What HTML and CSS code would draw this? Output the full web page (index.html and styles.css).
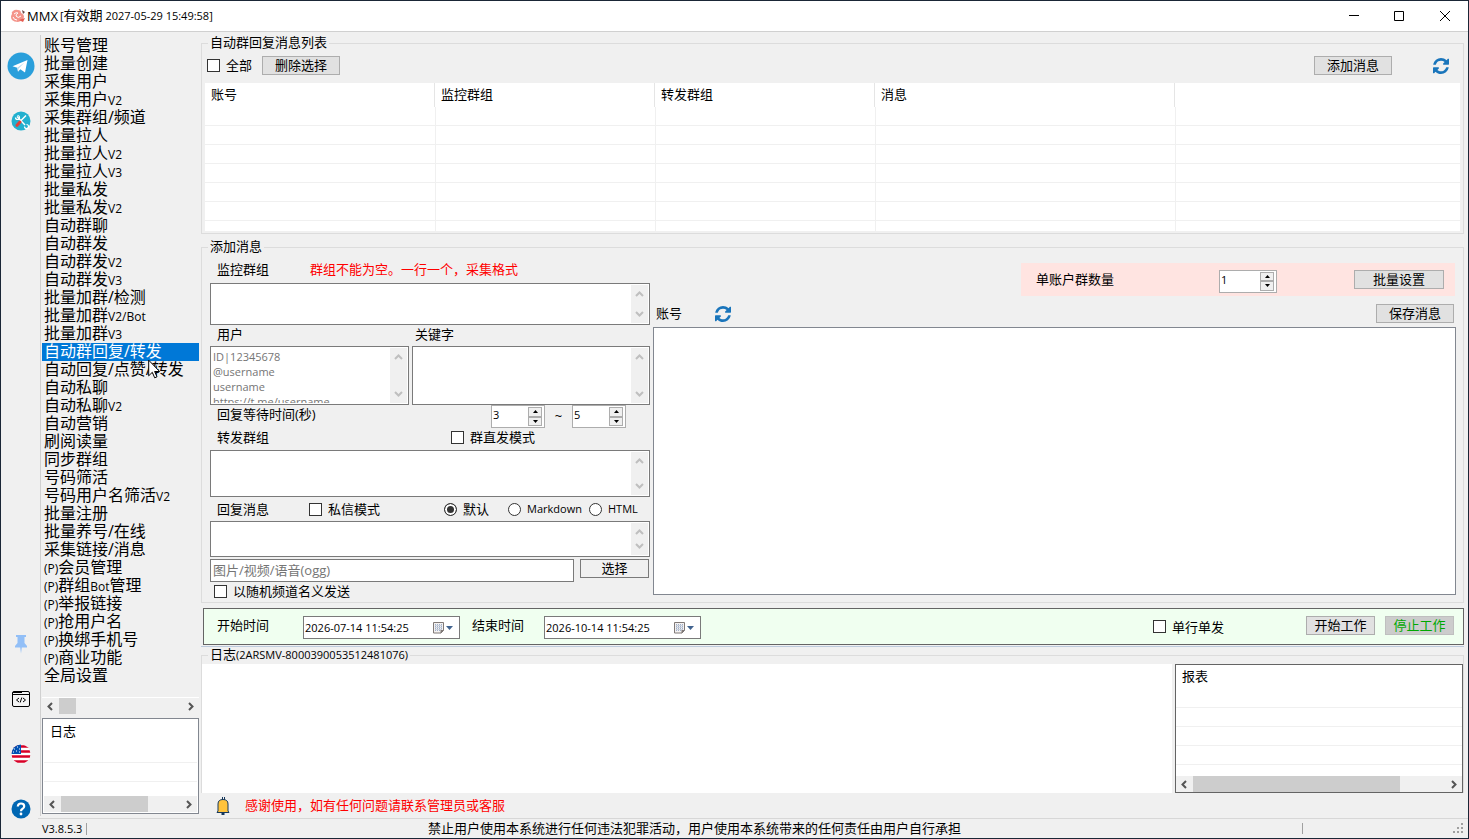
FILE: index.html
```html
<!DOCTYPE html>
<html lang="zh-CN">
<head>
  <meta charset="UTF-8">
  <meta name="viewport" content="width=device-width, initial-scale=1.0">
  <title>MMX</title>
  <link rel="stylesheet" href="styles.css">
</head>
<body>
  <!-- Shared icons -->
  <svg class="sprite" width="0" height="0">
    <symbol id="up" viewBox="0 0 9 6"><path d="M1 5 L4.500 1.500 L8 5" fill="none" stroke="currentColor" stroke-width="2"/></symbol>
    <symbol id="down" viewBox="0 0 9 6"><path d="M1 1 L4.500 4.500 L8 1" fill="none" stroke="currentColor" stroke-width="2"/></symbol>
    <symbol id="left" viewBox="0 0 6 9"><path d="M5 1 L1.500 4.500 L5 8" fill="none" stroke="currentColor" stroke-width="2"/></symbol>
    <symbol id="right" viewBox="0 0 6 9"><path d="M1 1 L4.500 4.500 L1 8" fill="none" stroke="currentColor" stroke-width="2"/></symbol>
    <symbol id="tri-up" viewBox="0 0 5 3"><path d="M0 3 L2.500 0 L5 3z"/></symbol>
    <symbol id="tri-down" viewBox="0 0 5 3"><path d="M0 0 L2.500 3 L5 0z"/></symbol>
    <symbol id="refresh" viewBox="128 128 1536 1536"><path fill="#1a75bb" d="M1639 1056q0 5-1 7-64 268-268 434.500t-478 166.500q-146 0-282.500-55t-243.500-157l-129 129q-19 19-45 19t-45-19-19-45v-448q0-26 19-45t45-19h448q26 0 45 19t19 45-19 45l-137 137q71 66 161 102t187 36q134 0 250-65t186-179q11-17 53-117 8-23 30-23h192q13 0 22.500 9.500t9.500 22.500zm25-800v448q0 26-19 45t-45 19h-448q-26 0-45-19t-19-45 19-45l138-138q-148-137-349-137-134 0-250 65t-186 179q-11 17-53 117-8 23-30 23h-199q-13 0-22.500-9.500t-9.500-22.500v-7q65-268 270-434.500t480-166.500q146 0 284 55.500t245 156.500l130-129q19-19 45-19t45 19 19 45z"/></symbol>
    <symbol id="calendar" viewBox="0 0 21 14">
      <path d="M.5 1.500h10v8l-2.500 2.500h-7.500z" fill="#f4f1f0" stroke="#7f7977"/>
      <path d="M2 3.500h7M2 5.500h7M2 7.500h7M2 9.500h5" stroke="#9fb0ca" stroke-dasharray="1 1"/>
      <path d="M2 4.500h7M2 6.500h7M2 8.500h7" stroke="#c9d0dc"/>
      <path d="M7.500 12.500v-3.500h3.500z" fill="#7f7977"/>
      <path d="M13 5h7l-3.500 4z" fill="#41638f"/>
    </symbol>
  </svg>

  <header class="titlebar">
    <svg class="logo" width="16" height="16" viewBox="0 0 16 16">
      <path d="M3 3 Q5 1 8 2 Q11 2 11 5 Q14 6 14 9 Q13 13 8 14 Q4 14 2 12 Q0 9 2 6 Q1 4 3 3z" fill="#f4958b"/>
      <path d="M4 6 Q6 4 8 5 Q6 6 6 8 Q8 11 11 8 M3 9 Q4 12 7 12" fill="none" stroke="#fff" stroke-width="1"/>
      <path d="M12 2 L15 4 L13 6z" fill="#6d4a47"/>
      <path d="M9 12 L15 10 L13 14z" fill="#e55c52"/>
    </svg>
    <h1 class="window-title">MMX</h1>
    <span class="expiry">[<span class="cjk">有效期</span> 2027-05-29 15:49:58]</span>
    <div class="window-controls">
      <button aria-label="最小化"><svg width="11" height="11" viewBox="0 0 11 11"><path d="M1 4.500h10" stroke="#000"/></svg></button>
      <button aria-label="最大化"><svg width="11" height="11" viewBox="0 0 11 11"><path d="M.5 .5h9v9h-9z" fill="none" stroke="#000"/></svg></button>
      <button aria-label="关闭"><svg width="11" height="11" viewBox="0 0 11 11"><path d="M0 0l10 10M10 0l-10 10" stroke="#000"/></svg></button>
    </div>
  </header>

  <div class="workspace">
    <div class="rail">
      <button aria-label="Telegram">
        <svg width="28" height="28" viewBox="0 0 28 28"><circle cx="14" cy="14" r="13.500" fill="#2a9fdb"/><path d="M5.500 14.300 L20.500 8 L18 20.500 L13.300 17.300 L11 19.800 L10.300 15.800z" fill="#fff"/><path d="M10.300 15.800 L17.500 10.500 L11.600 16.500 L11 19.800z" fill="#b5d9ee"/></svg>
      </button>
      <button aria-label="工具">
        <svg width="20" height="20" viewBox="0 0 20 20"><circle cx="10" cy="10" r="9.500" fill="#22b0cf"/><path d="M6 5.500 L14 14" stroke="#fff" stroke-width="1.400"/><path d="M4.500 6.500a2 2 0 1 0 2-2M13.500 15.500a2 2 0 1 0 2-2" fill="none" stroke="#fff" stroke-width="1.200"/><path d="M15 4.500 L10 9.500" stroke="#fff" stroke-width="1.500"/><path d="M9 11 L6 14.300" stroke="#e0413a" stroke-width="3" stroke-linecap="round"/></svg>
      </button>
      <span class="rail-space"></span>
      <button aria-label="置顶">
        <svg width="20" height="20" viewBox="0 0 20 20"><path d="M5 1h10v2h-1.500v6l2.500 3v1.500h-5.200L10 19.500 9.200 13.500H4V12l2.500-3V3H5z" fill="#92bff7"/></svg>
      </button>
      <button aria-label="代码">
        <svg width="20" height="20" viewBox="0 0 20 20"><rect x="1.500" y="2.500" width="17" height="15" rx="1.500" fill="#f4f4f4" stroke="#000"/><path d="M1.500 5.500h17" stroke="#000"/><path d="M2 3.500h9" stroke="#000"/><path d="M8 9l-2.500 2 2.500 2M12 9l2.500 2-2.500 2M10.800 8.500l-1.600 5" fill="none" stroke="#000"/></svg>
      </button>
      <button aria-label="语言">
        <svg width="20" height="20" viewBox="0 0 20 20"><clipPath id="disc"><circle cx="10" cy="10" r="9.500"/></clipPath><g clip-path="url(#disc)"><path d="M0 0h20v20H0z" fill="#fff"/><path d="M0 2.500h20M0 7.500h20M0 12.500h20M0 17.500h20" stroke="#d80027" stroke-width="2.400"/><path d="M0 0h10v10H0z" fill="#0052b4"/><path d="M3 5h1M6 3h1M8 5h1M5 7h1M8 8h1M2 8h1" stroke="#fff" stroke-width="1"/></g></svg>
      </button>
      <button aria-label="帮助">
        <svg width="20" height="20" viewBox="0 0 20 20"><circle cx="10" cy="10" r="9.500" fill="#0067b3"/><path d="M6.800 7.500 Q7 4.500 10 4.500 Q13.200 4.500 13.200 7.300 Q13.200 9 11.300 10 Q10 10.700 10 12.300" fill="none" stroke="#fff" stroke-width="2.200"/><circle cx="10" cy="15" r="1.400" fill="#fff"/></svg>
      </button>
    </div>

    <aside class="sidebar">
      <nav class="menu">
        <a href="#">账号管理</a>
        <a href="#">批量创建</a>
        <a href="#">采集用户</a>
        <a href="#">采集用户<small>V2</small></a>
        <a href="#">采集群组/频道</a>
        <a href="#">批量拉人</a>
        <a href="#">批量拉人<small>V2</small></a>
        <a href="#">批量拉人<small>V3</small></a>
        <a href="#">批量私发</a>
        <a href="#">批量私发<small>V2</small></a>
        <a href="#">自动群聊</a>
        <a href="#">自动群发</a>
        <a href="#">自动群发<small>V2</small></a>
        <a href="#">自动群发<small>V3</small></a>
        <a href="#">批量加群/检测</a>
        <a href="#">批量加群<small>V2/Bot</small></a>
        <a href="#">批量加群<small>V3</small></a>
        <a href="#" class="active">自动群回复/转发
          <svg class="cursor" width="13" height="20" viewBox="0 0 13 20"><path d="M.7 1.200v15.600l3.600-3.500 2.400 5.500 2.300-1-2.400-5.300h5z" fill="#fff" stroke="#000"/></svg>
        </a>
        <a href="#">自动回复/点赞/转发</a>
        <a href="#">自动私聊</a>
        <a href="#">自动私聊<small>V2</small></a>
        <a href="#">自动营销</a>
        <a href="#">刷阅读量</a>
        <a href="#">同步群组</a>
        <a href="#">号码筛活</a>
        <a href="#">号码用户名筛活<small>V2</small></a>
        <a href="#">批量注册</a>
        <a href="#">批量养号/在线</a>
        <a href="#">采集链接/消息</a>
        <a href="#"><small>(P)</small>会员管理</a>
        <a href="#"><small>(P)</small>群组<small>Bot</small>管理</a>
        <a href="#"><small>(P)</small>举报链接</a>
        <a href="#"><small>(P)</small>抢用户名</a>
        <a href="#"><small>(P)</small>换绑手机号</a>
        <a href="#"><small>(P)</small>商业功能</a>
        <a href="#">全局设置</a>
      </nav>
      <div class="hscroll menu-scroll">
        <svg width="6" height="9"><use href="#left"/></svg>
        <div class="track"><div class="thumb"></div></div>
        <svg width="6" height="9"><use href="#right"/></svg>
      </div>
      <div class="side-log">
        <div class="lines">
          <table>
            <thead><tr><th>日志</th></tr></thead>
            <tbody><tr><td></td></tr><tr><td></td></tr></tbody>
          </table>
        </div>
        <div class="hscroll">
          <svg width="6" height="9"><use href="#left"/></svg>
          <div class="track"><div class="thumb"></div></div>
          <svg width="6" height="9"><use href="#right"/></svg>
        </div>
      </div>
    </aside>

    <main class="main">
      <fieldset class="list-group">
        <legend>自动群回复消息列表</legend>
        <div class="list-tools">
          <label class="check"><input type="checkbox"><span>全部</span></label>
          <button class="btn wide">删除选择</button>
          <button class="btn wide add">添加消息</button>
          <button class="icon-btn" aria-label="刷新"><svg width="16" height="16"><use href="#refresh"/></svg></button>
        </div>
        <div class="message-list">
          <table>
            <colgroup><col class="c-account"><col class="c-group"><col class="c-group"><col class="c-message"><col></colgroup>
            <thead>
              <tr><th>账号</th><th>监控群组</th><th>转发群组</th><th>消息</th><th></th></tr>
            </thead>
            <tbody>
              <tr><td></td><td></td><td></td><td></td><td></td></tr>
              <tr><td></td><td></td><td></td><td></td><td></td></tr>
              <tr><td></td><td></td><td></td><td></td><td></td></tr>
              <tr><td></td><td></td><td></td><td></td><td></td></tr>
              <tr><td></td><td></td><td></td><td></td><td></td></tr>
              <tr><td></td><td></td><td></td><td></td><td></td></tr>
              <tr><td></td><td></td><td></td><td></td><td></td></tr>
            </tbody>
          </table>
        </div>
      </fieldset>

      <fieldset class="editor-group">
        <legend>添加消息</legend>
        <div class="editor">
          <div class="form">
            <div class="row row-monitor">
              <label for="monitor">监控群组</label>
              <span class="warn">群组不能为空。一行一个，采集格式</span>
            </div>
            <div class="area area-monitor">
              <textarea id="monitor"></textarea>
              <div class="vscroll"><svg width="9" height="6"><use href="#up"/></svg><svg width="9" height="6"><use href="#down"/></svg></div>
            </div>
            <div class="row row-pair">
              <label for="users">用户</label>
              <label for="keywords">关键字</label>
            </div>
            <div class="pair">
              <div class="area">
                <textarea id="users" placeholder="ID|12345678&#10;@username&#10;username&#10;https://t.me/username"></textarea>
                <div class="vscroll"><svg width="9" height="6"><use href="#up"/></svg><svg width="9" height="6"><use href="#down"/></svg></div>
              </div>
              <div class="area">
                <textarea id="keywords"></textarea>
                <div class="vscroll"><svg width="9" height="6"><use href="#up"/></svg><svg width="9" height="6"><use href="#down"/></svg></div>
              </div>
            </div>
            <div class="row row-wait">
              <label for="wait-from">回复等待时间(秒)</label>
              <div class="spin">
                <input type="number" id="wait-from" value="3">
                <div class="spin-buttons"><button aria-label="增加"><svg width="5" height="3"><use href="#tri-up"/></svg></button><button aria-label="减少"><svg width="5" height="3"><use href="#tri-down"/></svg></button></div>
              </div>
              <span class="tilde">~</span>
              <div class="spin">
                <input type="number" aria-label="最长等待" value="5">
                <div class="spin-buttons"><button aria-label="增加"><svg width="5" height="3"><use href="#tri-up"/></svg></button><button aria-label="减少"><svg width="5" height="3"><use href="#tri-down"/></svg></button></div>
              </div>
            </div>
            <div class="row row-forward">
              <label for="forward">转发群组</label>
              <label class="check"><input type="checkbox"><span>群直发模式</span></label>
            </div>
            <div class="area area-forward">
              <textarea id="forward"></textarea>
              <div class="vscroll"><svg width="9" height="6"><use href="#up"/></svg><svg width="9" height="6"><use href="#down"/></svg></div>
            </div>
            <div class="row row-reply">
              <label for="reply">回复消息</label>
              <label class="check"><input type="checkbox">私信模式</label>
              <label class="check"><input type="radio" name="format" checked>默认</label>
              <label class="check latin"><input type="radio" name="format">Markdown</label>
              <label class="check latin"><input type="radio" name="format">HTML</label>
            </div>
            <div class="area area-reply">
              <textarea id="reply"></textarea>
              <div class="vscroll"><svg width="9" height="6"><use href="#up"/></svg><svg width="9" height="6"><use href="#down"/></svg></div>
            </div>
            <div class="file-row">
              <input type="text" class="file" aria-label="媒体文件" placeholder="图片/视频/语音(ogg)">
              <button class="btn plain">选择</button>
            </div>
            <label class="check random"><input type="checkbox"><span>以随机频道名义发送</span></label>
          </div>

          <div class="accounts">
            <div class="batch">
              <label for="per-account">单账户群数量</label>
              <div class="spin">
                <input type="number" id="per-account" value="1">
                <div class="spin-buttons"><button aria-label="增加"><svg width="5" height="3"><use href="#tri-up"/></svg></button><button aria-label="减少"><svg width="5" height="3"><use href="#tri-down"/></svg></button></div>
              </div>
              <button class="btn batch-btn">批量设置</button>
            </div>
            <div class="accounts-head">
              <span>账号</span>
              <button class="icon-btn" aria-label="刷新账号"><svg width="16" height="16"><use href="#refresh"/></svg></button>
              <button class="btn wide">保存消息</button>
            </div>
            <div class="account-list"></div>
          </div>
        </div>
      </fieldset>

      <div class="schedule-wrap">
        <div class="schedule">
          <label for="start">开始时间</label>
          <div class="date">
            <input type="text" id="start" value="2026-07-14 11:54:25">
            <button aria-label="选择开始时间"><svg width="21" height="14"><use href="#calendar"/></svg></button>
          </div>
          <label for="end">结束时间</label>
          <div class="date">
            <input type="text" id="end" value="2026-10-14 11:54:25">
            <button aria-label="选择结束时间"><svg width="21" height="14"><use href="#calendar"/></svg></button>
          </div>
          <label class="check single"><input type="checkbox">单行单发</label>
          <button class="btn">开始工作</button>
          <button class="btn stop">停止工作</button>
        </div>
      </div>

      <fieldset class="log-group">
        <legend>日志<span class="latin">(2ARSMV-8000390053512481076)</span></legend>
        <div class="logs">
          <div class="log"></div>
          <div class="report">
            <div class="lines">
              <table>
                <thead><tr><th>报表</th></tr></thead>
                <tbody><tr><td></td></tr><tr><td></td></tr><tr><td></td></tr><tr><td></td></tr></tbody>
              </table>
            </div>
            <div class="hscroll">
              <svg width="6" height="9"><use href="#left"/></svg>
              <div class="track"><div class="thumb"></div></div>
              <svg width="6" height="9"><use href="#right"/></svg>
            </div>
          </div>
        </div>
      </fieldset>

      <div class="notice">
        <svg width="14" height="18" viewBox="0 0 14 18"><path d="M6.500 0v3M8.500 0v3" stroke="#16385c"/><path d="M2 14V7 Q2 2.500 7 2.500 Q12 2.500 12 7v7l1 1.500H1z" fill="#ffc33c" stroke="#16385c"/><path d="M5.500 17h3" stroke="#16385c" stroke-width="2"/></svg>
        <span>感谢使用，如有任何问题请联系管理员或客服</span>
      </div>
    </main>
  </div>

  <footer class="statusbar">
    <span class="version">V3.8.5.3</span>
    <span class="disclaimer">禁止用户使用本系统进行任何违法犯罪活动，用户使用本系统带来的任何责任由用户自行承担</span>
    <span class="grip"><svg width="11" height="11" viewBox="0 0 11 11"><path d="M8 0h2v2H8zM4 4h2v2H4zM8 4h2v2H8zM0 8h2v2H0zM4 8h2v2H4zM8 8h2v2H8z" fill="#a0a0a0"/></svg></span>
  </footer>
</body>
</html>
```
FILE: styles.css
```css
* {
  box-sizing: border-box;
}
body {
  margin: 0;
  min-height: 100vh;
  display: flex;
  flex-direction: column;
  border: 1px solid #1a2636;
  background: #f0f0f0;
  color: #000;
  font-family: "Open Sans", "Noto Sans CJK SC", sans-serif;
  font-size: 13px;
  line-height: 16px;
}
button, input, textarea {
  font: inherit;
  color: inherit;
  margin: 0;
  padding: 0;
  outline: none;
}
button {
  border: 0;
  background: none;
}
svg {
  display: block;
  flex: none;
}
label, span, a {
  white-space: nowrap;
}
.sprite {
  position: absolute;
}
.latin {
  font-size: 11px;
}

/* Title bar */
.titlebar {
  display: flex;
  align-items: center;
  height: 31px;
  padding-left: 9px;
  background: #fff;
  border-bottom: 1px solid #d0d0d0;
}
.window-title {
  margin: 0 2px 0 1px;
  font-size: 13px;
  font-weight: 400;
}
.expiry {
  padding-bottom: 2px;
  font-size: 11px;
}
.cjk {
  font-size: 13px;
}
.window-controls {
  display: flex;
  align-self: stretch;
  margin-left: auto;
}
.window-controls button {
  display: flex;
  align-items: center;
  justify-content: center;
  width: 46px;
}

.workspace {
  flex: 1;
  display: flex;
}

/* Icon rail */
.rail {
  display: flex;
  flex-direction: column;
  align-items: center;
  gap: 41px;
  width: 40px;
  margin: 3px 0 2px;
  padding-top: 24px;
  border-right: 1px solid #d0d0d0;
}
.rail button {
  display: flex;
  align-items: center;
  justify-content: center;
  width: 28px;
  height: 14px;
}
.rail-space {
  flex: 1;
}

/* Sidebar */
.sidebar {
  display: flex;
  flex-direction: column;
  width: 160px;
  padding: 5px 2px 4px 1px;
}
.menu {
  flex: 1;
}
.menu a {
  position: relative;
  display: block;
  height: 18px;
  padding-left: 2px;
  color: #000;
  font-size: 16px;
  line-height: 16px;
  text-decoration: none;
}
.menu small {
  font-size: 12px;
}
.menu .active {
  background: #0078d7;
  color: #fff;
}
.cursor {
  position: absolute;
  left: 106px;
  top: 16px;
  z-index: 1;
}
.hscroll {
  display: flex;
  align-items: center;
  gap: 6px;
  height: 16px;
  padding: 0 5px;
  background: #f0f0f0;
  color: #555;
}
.track {
  flex: 1;
  align-self: stretch;
}
.thumb {
  width: 82%;
  height: 100%;
  background: #cdcdcd;
}
.menu-scroll {
  height: 17px;
  border-top: 1px solid #fff;
}
.menu-scroll .thumb {
  width: 17px;
}
.side-log {
  display: flex;
  flex-direction: column;
  height: 96px;
  margin-top: 4px;
  padding: 1px;
  border: 1px solid #828790;
  background: #fff;
}
.side-log .thumb {
  width: 73%;
}
.lines {
  flex: 1;
  overflow: hidden;
}

/* Tables */
table {
  width: 100%;
  border-spacing: 0;
  table-layout: fixed;
}
th {
  height: 24px;
  padding: 0 6px 3px;
  border-right: 1px solid #e5e5e5;
  font-weight: 400;
  text-align: left;
}
th:last-child {
  border-right: 0;
}
td {
  height: 19px;
  padding: 0;
  border-bottom: 1px solid #f0f0f0;
}
td + td {
  border-left: 1px solid #f0f0f0;
}
.message-list {
  height: 148px;
  overflow: hidden;
  background: #fff;
}
.c-account {
  width: 230px;
}
.c-group {
  width: 220px;
}
.c-message {
  width: 300px;
}

/* Controls */
.btn {
  width: 69px;
  height: 19px;
  border: 1px solid #adadad;
  background: #e1e1e1;
  line-height: 17px;
}
.btn.wide {
  width: 78px;
}
.btn.plain {
  border-color: #7a7a7a;
  background: #f0f0f0;
}
.btn.stop {
  border-color: #bfbfbf;
  background: #ccc;
  color: #00a800;
}
.check {
  display: flex;
  align-items: center;
  gap: 6px;
}
.check span {
  padding-bottom: 2px;
}
input[type="checkbox"], input[type="radio"] {
  appearance: none;
  flex: none;
  width: 13px;
  height: 13px;
  border: 1px solid #333;
  background: #fff;
}
input[type="radio"] {
  border-radius: 50%;
}
input[type="radio"]:checked {
  background: #333;
  box-shadow: inset 0 0 0 2px #fff;
}
.spin {
  display: flex;
  justify-content: space-between;
  width: 54px;
  height: 23px;
  padding: 1px;
  border: 1px solid #adadad;
  background: #fff;
}
.spin input {
  width: 32px;
  height: 16px;
  border: 0;
  background: none;
  font-size: 11px;
  appearance: textfield;
}
.spin input::-webkit-inner-spin-button {
  display: none;
}
.spin-buttons {
  display: flex;
  flex-direction: column;
  width: 15px;
  padding-right: 1px;
}
.spin-buttons button {
  display: flex;
  align-items: center;
  justify-content: center;
  flex: 1;
  border: 1px solid #adadad;
  background: #f0f0f0;
}
.area {
  display: flex;
  padding: 1px;
  border: 1px solid #7a7a7a;
  background: #fff;
}
textarea {
  flex: 1;
  min-width: 0;
  padding: 1px;
  border: 0;
  background: none;
  font-size: 11px;
  line-height: 15px;
  resize: none;
  overflow: hidden;
}
::placeholder {
  color: #757575;
}
.vscroll {
  display: flex;
  flex-direction: column;
  justify-content: space-between;
  align-items: center;
  width: 17px;
  padding: 6px 0;
  background: #f0f0f0;
  color: #bfbfbf;
}

/* Main */
.main {
  flex: 1;
  display: flex;
  flex-direction: column;
  min-width: 0;
  padding: 3px 4px 0 0;
}
fieldset {
  min-width: 0;
  margin: 0;
  padding: 0;
  border: 1px solid #dcdcdc;
}
legend {
  margin-left: 6px;
  padding: 0 2px 2px;
  line-height: 14px;
}
.list-group {
  padding: 0 3px 2px;
}
.list-group legend {
  margin-left: 3px;
}
.list-tools {
  display: flex;
  align-items: center;
  height: 32px;
  padding: 0 11px 3px 2px;
}
.list-tools .btn {
  margin-left: 10px;
}
.list-tools .add {
  margin-left: auto;
}
.list-tools .icon-btn {
  margin-left: 41px;
}
.editor-group {
  margin-top: 5px;
}
.editor {
  display: flex;
  gap: 3px;
  padding: 0 7px 0 8px;
}
.form {
  width: 440px;
}
.row {
  display: grid;
  align-items: center;
}
.row > label:first-child {
  padding-left: 7px;
}
.row-monitor {
  grid-template-columns: 100px 1fr;
  height: 28px;
}
.warn, .notice {
  color: #f00;
}
.area-monitor {
  height: 42px;
}
.row-pair {
  grid-template-columns: 205px 1fr;
  height: 21px;
  padding-bottom: 4px;
}
.pair {
  display: grid;
  grid-template-columns: 199px 1fr;
  gap: 3px;
  height: 59px;
}
.row-wait {
  grid-template-columns: 281px 54px 27px 54px;
  height: 23px;
}
.row-wait label {
  padding-bottom: 6px;
}
.tilde {
  padding-bottom: 2px;
  text-align: center;
}
.row-forward {
  grid-template-columns: 241px auto;
  height: 22px;
  padding-bottom: 3px;
}
.row-forward label:first-child {
  padding-bottom: 2px;
}
.area-forward {
  height: 47px;
}
.row-reply {
  grid-template-columns: 99px 135px 64px 81px auto;
  height: 24px;
}
.area-reply {
  height: 36px;
}
.file-row {
  display: flex;
  gap: 6px;
  margin-top: 2px;
  padding-right: 1px;
}
.file {
  flex: 1;
  min-width: 0;
  height: 23px;
  padding: 0 2px 2px;
  border: 1px solid #7a7a7a;
  background: #fff;
}
.random {
  height: 20px;
  padding: 0 0 1px 4px;
}
.accounts {
  flex: 1;
  display: flex;
  flex-direction: column;
  min-width: 0;
  padding: 8px 0 7px;
}
.batch {
  display: flex;
  align-items: center;
  align-self: flex-end;
  width: 434px;
  height: 33px;
  margin-right: 1px;
  padding: 0 11px 0 15px;
  background: #ffe4e1;
}
.batch label {
  padding-bottom: 2px;
}
.batch .spin {
  width: 58px;
  margin: 3px 0 0 105px;
}
.batch-btn {
  width: 90px;
  margin: 0 0 1px auto;
}
.accounts-head {
  display: flex;
  align-items: center;
  height: 31px;
  padding: 4px 2px 0 3px;
}
.accounts-head span {
  padding-bottom: 2px;
}
.accounts-head .icon-btn {
  margin-left: 33px;
}
.accounts-head .btn {
  margin-left: auto;
}
.account-list {
  flex: 1;
  border: 1px solid #828790;
  background: #fff;
}

/* Schedule bar */
.schedule-wrap {
  padding: 5px 0 1px 2px;
  border-bottom: 1px solid #bccadc;
}
.schedule {
  display: flex;
  align-items: center;
  height: 37px;
  padding: 0 9px 0 13px;
  border: 1px solid #646464;
  background: #f0fff0;
}
.schedule label[for] {
  padding-bottom: 3px;
}
.date {
  display: flex;
  align-items: center;
  width: 157px;
  height: 23px;
  margin: 2px 12px 0 34px;
  padding: 0 5px 0 1px;
  border: 1px solid #7a7a7a;
  background: #fff;
}
.date + label + .date {
  margin-left: 20px;
}
.date input {
  flex: 1;
  min-width: 0;
  border: 0;
  background: none;
  font-size: 11px;
}
.single {
  margin-left: auto;
  margin-right: 82px;
}
.schedule .btn {
  margin-bottom: 2px;
}
.schedule .btn + .btn {
  margin-left: 10px;
}

/* Logs */
.log-group {
  flex: 1;
  display: flex;
  flex-direction: column;
  border-bottom: 0;
}
.logs {
  flex: 1;
  display: flex;
  gap: 3px;
}
.log {
  flex: 1;
  background: #fff;
}
.report {
  display: flex;
  flex-direction: column;
  width: 288px;
  border: 1px solid #646464;
  background: #fff;
}
.notice {
  display: flex;
  align-items: center;
  gap: 15px;
  height: 25px;
  padding-left: 15px;
}
.notice span {
  padding-bottom: 2px;
}

/* Status bar */
.statusbar {
  display: flex;
  align-items: center;
  height: 20px;
  margin-left: 37px;
  border-top: 1px solid #d7d7d7;
}
.version {
  width: 49px;
  padding-left: 4px;
  border-right: 1px solid #a0a0a0;
  font-size: 11px;
  line-height: 12px;
}
.disclaimer {
  flex: 1;
  padding-bottom: 2px;
  text-align: center;
}
.grip {
  display: flex;
  justify-content: flex-end;
  width: 166px;
  padding-right: 4px;
  border-left: 1px solid #a0a0a0;
}
```
